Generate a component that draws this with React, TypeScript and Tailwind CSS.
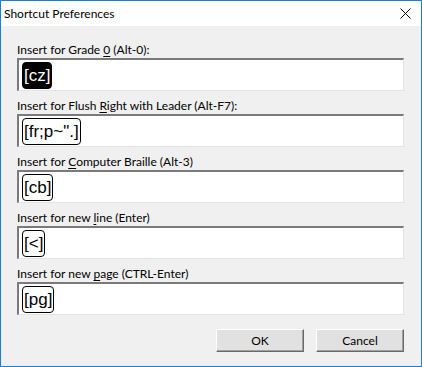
import React from "react";

const FONT = { fontFamily: 'Lato, "Noto Sans", "Liberation Sans", Arial, sans-serif' };

type Row = { before: string; key: string; after: string; code: string; selected?: boolean };

const ROWS: Row[] = [
  { before: "Insert for Grade ", key: "0", after: " (Alt-0):", code: "[cz]", selected: true },
  { before: "Insert for Flush ", key: "R", after: "ight with Leader (Alt-F7):", code: "[fr;p~\".]" },
  { before: "Insert for ", key: "C", after: "omputer Braille (Alt-3)", code: "[cb]" },
  { before: "Insert for new ", key: "l", after: "ine (Enter)", code: "[<]" },
  { before: "Insert for new ", key: "p", after: "age (CTRL-Enter)", code: "[pg]" },
];

function Field({ row }: { row: Row }) {
  return (
    <div className="flex flex-col">
      <div className="h-[16px] text-[12px] leading-[16px] text-black">
        {row.before}
        <span className="underline underline-offset-2">{row.key}</span>
        {row.after}
      </div>
      {/* sunken edit box */}
      <div className="h-[33px] w-[387px] border-t-2 border-l-2 border-t-[#7a7a7a] border-l-[#7a7a7a] border-r border-b border-r-[#e3e3e3] border-b-[#e3e3e3] bg-white flex items-center pl-[3px]">
        <span
          className={`h-[27px] px-[1px] rounded-[4px] border flex items-center text-[17px] leading-none ${
            row.selected ? "bg-black text-white border-black" : "bg-white text-black border-black"
          }`}
          style={{ fontFamily: '"Liberation Sans", Arial, sans-serif' }}
        >
          {row.code}
        </span>
      </div>
    </div>
  );
}

function Btn({ label }: { label: string }) {
  return (
    <button className="w-[88px] h-[23px] bg-[#e1e1e1] border border-t-white border-l-white border-r-[#696969] border-b-[#696969] shadow-[inset_-1px_-1px_0_#a0a0a0] text-[12px] text-black">
      {label}
    </button>
  );
}

export default function App() {
  return (
    <div className="w-[422px] h-[367px] border border-[#1a7fd4] bg-[#f0f0f0] flex flex-col" style={FONT}>
      {/* title bar */}
      <div className="h-[25px] bg-white flex items-center justify-between pl-[3px] pr-[10px]">
        <span className="text-[12px] text-black">Shortcut Preferences</span>
        <svg width="11" height="11" viewBox="0 0 11 11">
          <path d="M0.5 0.5 L10.5 10.5 M10.5 0.5 L0.5 10.5" stroke="#000" strokeWidth="1" />
        </svg>
      </div>

      {/* body */}
      <div className="flex flex-col gap-[7px] pl-[16px] pt-[16px]">
        {ROWS.map(r => (
          <Field key={r.code} row={r} />
        ))}
      </div>

      <div className="flex justify-end gap-[12px] pr-[17px] mt-[14px]">
        <Btn label="OK" />
        <Btn label="Cancel" />
      </div>
    </div>
  );
}
